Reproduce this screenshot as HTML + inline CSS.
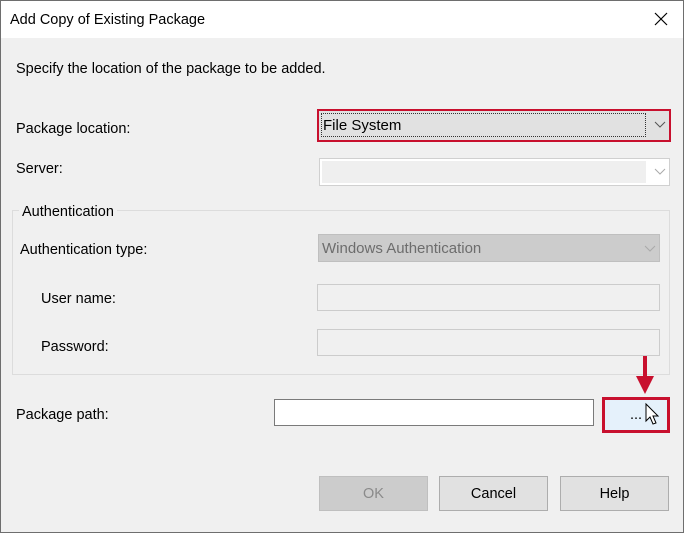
<!DOCTYPE html>
<html><head><style>
*{margin:0;padding:0;box-sizing:border-box}
body{width:684px;height:533px;background:#f0f0f0;font-family:"Liberation Sans",Arial,sans-serif;font-size:14.5px;color:#000;position:relative;overflow:hidden}
.a{position:absolute}
.t{position:absolute;white-space:nowrap;line-height:16px}
.btn{position:absolute;background:#e1e1e1;border:1px solid #adadad;text-align:center;line-height:35px}
</style></head><body>
<div class="a" style="left:0;top:0;width:684px;height:38px;background:#fff"></div>
<div class="t" style="left:10px;top:12px;font-size:14.5px">Add Copy of Existing Package</div>
<svg class="a" style="left:654px;top:12px" width="14" height="14"><path d="M1 1L13 13M13 1L1 13" stroke="#000" stroke-width="1.2"/></svg>
<div class="t" style="left:16px;top:61px">Specify the location of the package to be added.</div>

<div class="t" style="left:16px;top:121px">Package location:</div>
<div class="a" style="left:317px;top:109px;width:354px;height:33px;border:2px solid #c8102e;background:#e1e1e1"></div>
<div class="a" style="left:321px;top:113px;width:325px;height:24px;border:1px dotted #333"></div>
<div class="t" style="left:323px;top:118px;font-size:15px">File System</div>
<svg class="a" style="left:654px;top:121px" width="12" height="8"><path d="M1 1L6 6L11 1" stroke="#555" fill="none"/></svg>

<div class="t" style="left:16px;top:161px">Server:</div>
<div class="a" style="left:319px;top:158px;width:351px;height:28px;border:1px solid #d0d0d0;background:#fff"></div>
<div class="a" style="left:322px;top:161px;width:324px;height:22px;background:#efefef"></div>
<svg class="a" style="left:654px;top:168px" width="12" height="8"><path d="M1 1L6 6L11 1" stroke="#aaa" fill="none"/></svg>

<div class="a" style="left:12px;top:210px;width:658px;height:165px;border:1px solid #dcdcdc"></div>
<div class="t" style="left:19px;top:204px;background:#f0f0f0;padding:0 3px">Authentication</div>

<div class="t" style="left:20px;top:242px">Authentication type:</div>
<div class="a" style="left:318px;top:234px;width:342px;height:28px;border:1px solid #bfbfbf;background:#cccccc"></div>
<div class="t" style="left:322px;top:241px;color:#6d6d6d;font-size:15px">Windows Authentication</div>
<svg class="a" style="left:644px;top:245px" width="12" height="8"><path d="M1 1L6 6L11 1" stroke="#aaa" fill="none"/></svg>

<div class="t" style="left:41px;top:291px">User name:</div>
<div class="a" style="left:317px;top:284px;width:343px;height:27px;border:1px solid #cccccc;background:#f0f0f0"></div>
<div class="t" style="left:41px;top:339px">Password:</div>
<div class="a" style="left:317px;top:329px;width:343px;height:27px;border:1px solid #cccccc;background:#f0f0f0"></div>

<div class="t" style="left:16px;top:407px">Package path:</div>
<div class="a" style="left:274px;top:399px;width:320px;height:27px;border:1px solid #7a7a7a;background:#fff"></div>
<div class="a" style="left:602px;top:397px;width:68px;height:36px;border:3px solid #c8102e;background:#e5f1fb"></div>
<div class="t" style="left:630px;top:407px">...</div>
<svg class="a" style="left:644px;top:402px" width="16" height="24"><path d="M2 2L2 19L6 15L9 22L12 21L9 14L14 14Z" fill="#fff" stroke="#000" stroke-width="1"/></svg>
<svg class="a" style="left:634px;top:356px" width="22" height="40"><path d="M11 0V22" stroke="#c8102e" stroke-width="4"/><path d="M2 20L20 20L11 38Z" fill="#c8102e"/></svg>

<div class="btn" style="left:319px;top:476px;width:109px;height:35px;background:#cccccc;border-color:#bfbfbf;color:#8a8a8a">OK</div>
<div class="btn" style="left:439px;top:476px;width:109px;height:35px">Cancel</div>
<div class="btn" style="left:560px;top:476px;width:109px;height:35px">Help</div>
<div class="a" style="left:0;top:0;width:684px;height:533px;border:1px solid #6e6e6e"></div>
</body></html>
